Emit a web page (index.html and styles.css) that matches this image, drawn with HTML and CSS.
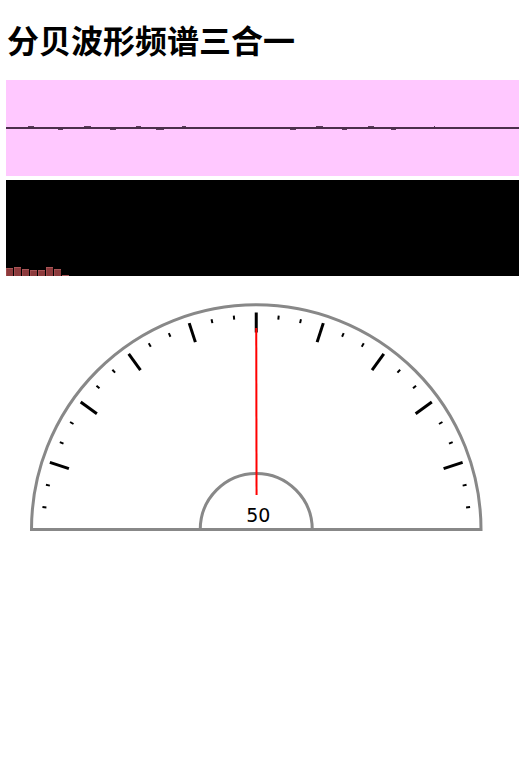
FILE: index.html
```html
<!DOCTYPE html>
<html lang="zh">
<head>
<meta charset="utf-8">
<title>分贝波形频谱三合一</title>
<link rel="stylesheet" href="styles.css">
</head>
<body>
<h1 class="title">分贝波形频谱三合一</h1>
<div class="wave">
  <svg class="wave-svg" width="513" height="96" viewBox="0 0 513 96">
    <rect class="wave-line" x="0" y="47" width="513" height="2"/>
    <g class="wave-noise">
      <rect x="22" y="46" width="6" height="1"/>
      <rect x="52" y="49" width="5" height="1"/>
      <rect x="78" y="46" width="7" height="1"/>
      <rect x="104" y="49" width="6" height="1"/>
      <rect x="130" y="46" width="5" height="1"/>
      <rect x="150" y="49" width="8" height="1"/>
      <rect x="176" y="46" width="4" height="1"/>
      <rect x="284" y="49" width="6" height="1"/>
      <rect x="310" y="46" width="7" height="1"/>
      <rect x="336" y="49" width="5" height="1"/>
      <rect x="362" y="46" width="6" height="1"/>
      <rect x="385" y="49" width="5" height="1"/>
      <rect x="428" y="46" width="1" height="1"/>
    </g>
  </svg>
</div>
<div class="spectrum">
  <div class="bar" style="height:8px"></div>
  <div class="bar" style="height:9px"></div>
  <div class="bar" style="height:7px"></div>
  <div class="bar" style="height:6px"></div>
  <div class="bar" style="height:6px"></div>
  <div class="bar" style="height:9px"></div>
  <div class="bar" style="height:7px"></div>
  <div class="bar" style="height:1px"></div>
</div>
<svg class="gauge" width="513" height="260" viewBox="0 0 513 260">
  <path class="rim" d="M 25.5 249.5 A 224.75 224.75 0 0 1 475 249.5 Z"/>
  <path class="rim" d="M 194.25 249.5 A 56 56 0 0 1 306.25 249.5"/>
  <g transform="translate(250.25 249.5)">
    <g class="major">
      <line x1="0" y1="-197" x2="0" y2="-217" transform="rotate(-72)"/>
      <line x1="0" y1="-197" x2="0" y2="-217" transform="rotate(-54)"/>
      <line x1="0" y1="-197" x2="0" y2="-217" transform="rotate(-36)"/>
      <line x1="0" y1="-197" x2="0" y2="-217" transform="rotate(-18)"/>
      <line x1="0" y1="-197" x2="0" y2="-217" transform="rotate(0)"/>
      <line x1="0" y1="-197" x2="0" y2="-217" transform="rotate(18)"/>
      <line x1="0" y1="-197" x2="0" y2="-217" transform="rotate(36)"/>
      <line x1="0" y1="-197" x2="0" y2="-217" transform="rotate(54)"/>
      <line x1="0" y1="-197" x2="0" y2="-217" transform="rotate(72)"/>
    </g>
    <g class="minor">
      <line x1="0" y1="-211" x2="0" y2="-215" transform="rotate(-84)"/>
      <line x1="0" y1="-211" x2="0" y2="-215" transform="rotate(-78)"/>
      <line x1="0" y1="-211" x2="0" y2="-215" transform="rotate(-66)"/>
      <line x1="0" y1="-211" x2="0" y2="-215" transform="rotate(-60)"/>
      <line x1="0" y1="-211" x2="0" y2="-215" transform="rotate(-48)"/>
      <line x1="0" y1="-211" x2="0" y2="-215" transform="rotate(-42)"/>
      <line x1="0" y1="-211" x2="0" y2="-215" transform="rotate(-30)"/>
      <line x1="0" y1="-211" x2="0" y2="-215" transform="rotate(-24)"/>
      <line x1="0" y1="-211" x2="0" y2="-215" transform="rotate(-12)"/>
      <line x1="0" y1="-211" x2="0" y2="-215" transform="rotate(-6)"/>
      <line x1="0" y1="-211" x2="0" y2="-215" transform="rotate(6)"/>
      <line x1="0" y1="-211" x2="0" y2="-215" transform="rotate(12)"/>
      <line x1="0" y1="-211" x2="0" y2="-215" transform="rotate(24)"/>
      <line x1="0" y1="-211" x2="0" y2="-215" transform="rotate(30)"/>
      <line x1="0" y1="-211" x2="0" y2="-215" transform="rotate(42)"/>
      <line x1="0" y1="-211" x2="0" y2="-215" transform="rotate(48)"/>
      <line x1="0" y1="-211" x2="0" y2="-215" transform="rotate(60)"/>
      <line x1="0" y1="-211" x2="0" y2="-215" transform="rotate(66)"/>
      <line x1="0" y1="-211" x2="0" y2="-215" transform="rotate(78)"/>
      <line x1="0" y1="-211" x2="0" y2="-215" transform="rotate(84)"/>
    </g>
    <line class="needle" x1="0.3" y1="-34.5" x2="0" y2="-201.5"/>
  </g>
  <text class="value" x="252.3" y="242">50</text>
</svg>
</body>
</html>
```
FILE: styles.css
```css
html, body {
  background: #ffffff;
}
body {
  margin: 0 6px 6px;
  font-family: "Noto Sans CJK SC", "Liberation Sans", sans-serif;
  color: #000;
}
.title {
  font-size: 32px;
  font-weight: bold;
  line-height: 36.8px;
  height: 36.8px;
  margin: 21.44px 0;
  padding-left: 1px;
}
.wave {
  height: 96px;
  background: #ffc8ff;
}
.wave-svg {
  display: block;
}
.wave-line {
  fill: #4b2f4b;
}
.wave-noise rect {
  fill: #5a3a5a;
}
.spectrum {
  height: 96px;
  margin-top: 4px;
  background: #000;
  display: flex;
  align-items: flex-end;
  gap: 1px;
}
.bar {
  width: 7px;
  background: #8c3a3c;
  box-shadow: inset 0 1px 0 #a85557, inset 1px 0 0 #a04a4c;
}
.gauge {
  display: block;
  margin-top: 4px;
}
.rim {
  fill: none;
  stroke: #888888;
  stroke-width: 3;
}
.major line {
  stroke: #000;
  stroke-width: 3;
}
.minor line {
  stroke: #000;
  stroke-width: 2;
}
.needle {
  stroke: #ff0000;
  stroke-width: 2;
}
.value {
  font-family: "DejaVu Sans", sans-serif;
  font-size: 19px;
  text-anchor: middle;
  fill: #000;
}
```
